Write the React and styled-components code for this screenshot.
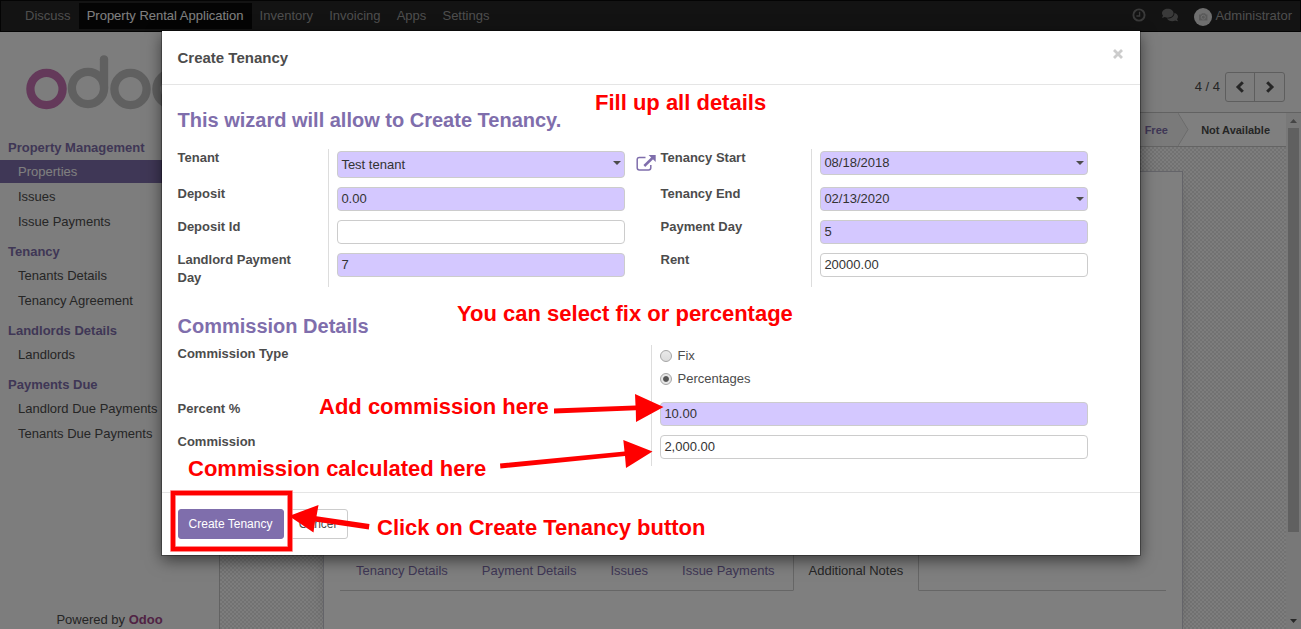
import React from "react";
import styled, { createGlobalStyle, css } from "styled-components";
import { FaComments } from "react-icons/fa";

const Global = createGlobalStyle`
  *, *::before, *::after { box-sizing: border-box; }
  body {
    margin: 0;
    overflow: hidden;
    font: 13px/18px "Liberation Sans", Arial, sans-serif;
    color: #4c4c4c;
  }
`;

const purple = "#7f6eac";

const Screen = styled.div`
  position: relative;
  width: 1301px;
  height: 629px;
  overflow: hidden;
  background: #fbfbfb;
`;

const Page = styled.div`
  height: 100%;
  display: flex;
  flex-direction: column;
`;

const Navbar = styled.nav`
  flex: none;
  height: 32px;
  display: flex;
  align-items: flex-start;
  background: #262626;
  border: 1px solid #080808;
  padding: 2px 8px 0 16px;
`;

const NavItem = styled.a`
  height: 26px;
  line-height: 25px;
  padding: 0 8.15px 0 8px;
  color: ${(p) => (p.$active ? "#fff" : "#9d9d9d")};
  background: ${(p) => (p.$active ? "#080808" : "transparent")};
`;

const Systray = styled.div`
  margin-left: auto;
  height: 26px;
  display: flex;
  align-items: center;
  color: #747474;
  line-height: 25px;
  svg { display: block; }
`;

const SysIcon = styled.span`
  margin-right: ${(p) => p.$gap}px;
  padding-bottom: ${(p) => p.$lift || 0}px;
`;

const Avatar = styled.svg`
  margin-top: 2px;
`;

const UserName = styled.span`
  margin-left: 3px;
  padding-bottom: 2px;
  color: #9d9d9d;
`;

const Main = styled.div`
  flex: 1;
  min-height: 0;
  display: flex;
`;

const Sidebar = styled.aside`
  width: 220px;
  flex: none;
  border-right: 1px solid #c4c4c4;
  background: #fafafa;
  display: flex;
  flex-direction: column;
`;

const Logo = styled.svg`
  display: block;
  width: 219px;
  height: 103px;
  flex: none;
`;

const MenuSection = styled.section`
  margin-bottom: 4px;
`;

const MenuHeader = styled.div`
  height: 25px;
  line-height: 25px;
  padding-left: 8px;
  font-weight: bold;
  color: ${purple};
`;

const MenuItem = styled.a`
  display: block;
  height: 23px;
  line-height: 23px;
  margin-bottom: 2px;
  padding-left: 18px;
  color: ${(p) => (p.$active ? "#fff" : "#4c4c4c")};
  background: ${(p) => (p.$active ? purple : "transparent")};
`;

const Powered = styled.div`
  margin-top: auto;
  height: 18px;
  text-align: center;
  b { color: #a24689; }
`;

const Content = styled.main`
  flex: 1;
  display: flex;
  flex-direction: column;
`;

const ControlPanel = styled.div`
  height: 81px;
  flex: none;
  border-bottom: 1px solid #c4c4c4;
  display: flex;
  justify-content: flex-end;
  padding: 40px 16px 0 0;
  line-height: 29px;
`;

const Pager = styled.div`
  margin-left: 5px;
  width: 60px;
  height: 30px;
  display: flex;
  border: 1px solid #bcbcbc;
  border-radius: 3px;
`;

const PagerButton = styled.span`
  width: 28px;
  display: grid;
  place-items: center;
  padding-bottom: 1px;
  & + & {
    width: 30px;
    border-left: 1px solid #bcbcbc;
  }
`;

const Scroller = styled.div`
  flex: 1;
  min-height: 0;
  display: flex;
`;

const FormView = styled.div`
  flex: 1;
  display: flex;
  flex-direction: column;
  background-color: #fafafa;
  background-image: conic-gradient(#e4e4e4 25%, #fafafa 0 50%, #e4e4e4 0 75%, #fafafa 0);
  background-size: 4px 4px;
`;

const Statusbar = styled.div`
  height: 34px;
  flex: none;
  background: #fff;
  border-bottom: 1px solid #c8c8c8;
  display: flex;
  justify-content: flex-end;
  font-size: 11px;
  font-weight: bold;
  line-height: 34px;
`;

const CurrentStatus = styled.span`
  width: 53px;
  padding-left: 19.5px;
  white-space: nowrap;
  color: ${purple};
  background: #f4f4f4;
`;

const StatusArrow = styled.svg`
  display: block;
  width: 11px;
  height: 33px;
`;

const NextStatus = styled.span`
  padding: 0 16px 0 12px;
`;

const Sheet = styled.div`
  flex: 1;
  width: 860px;
  margin: 24px 0 0 103px;
  border: 1px solid #c8c8d3;
  border-bottom: 0;
  background: #fff;
  box-shadow: 0 5px 20px -15px #000;
  padding: 378px 16px 0;
`;

const Tabs = styled.div`
  display: flex;
  height: 41px;
  border-bottom: 1px solid #ccc;
`;

const Tab = styled.a`
  height: 41px;
  line-height: 40px;
  margin-right: 2px;
  padding: 0 15px;
  border: 1px solid transparent;
  color: ${purple};
  ${(p) =>
    p.$active &&
    css`
      color: #4c4c4c;
      background: #fff;
      border-color: #ccc #ccc #fff;
    `}
`;

const Scrollbar = styled.div`
  width: 15px;
  background: #f1f1f1;
  display: flex;
  flex-direction: column;
  align-items: center;
`;

const ScrollButton = styled.svg`
  flex: none;
  width: 15px;
  height: 15px;
`;

const BottomScrollButton = styled(ScrollButton)`
  margin-top: auto;
`;

const Thumb = styled.div`
  width: 11px;
  height: 404px;
  background: #c1c1c1;
`;

const Backdrop = styled.div`
  position: absolute;
  inset: 0;
  padding: 31px 0 0 162px;
  background: rgba(0, 0, 0, 0.5);
`;

const Modal = styled.div`
  width: 978px;
  height: 524px;
  display: flex;
  flex-direction: column;
  background: #fff;
  box-shadow: 0 0 0 1px rgba(0, 0, 0, 0.3), 0 5px 15px rgba(0, 0, 0, 0.55);
`;

const ModalHeader = styled.header`
  height: 54px;
  flex: none;
  display: flex;
  justify-content: space-between;
  align-items: center;
  padding: 0 17.5px 0 15.5px;
  border-bottom: 1px solid #e5e5e5;
  font-size: 15px;
  font-weight: bold;
`;

const CloseIcon = styled.svg`
  display: block;
  width: 10px;
  height: 10px;
  margin-bottom: 7px;
`;

const ModalBody = styled.div`
  flex: 1;
  padding: 0 16px 0 15.5px;
`;

const Heading = styled.h2`
  margin: 0;
  padding-top: ${(p) => p.$top}px;
  height: ${(p) => p.$height}px;
  font-size: 20px;
  line-height: 24px;
  color: ${purple};
`;

const Groups = styled.div`
  display: flex;
`;

const Group = styled.div`
  width: ${(p) => p.$width}px;
`;

const Row = styled.div`
  display: grid;
  grid-template-columns: ${(p) => p.$label}px 1fr;
  height: ${(p) => p.$height || 33}px;
`;

const Label = styled.label`
  font-weight: bold;
  padding-right: 30px;
`;

const Value = styled.div`
  border-left: 1px solid #ddd;
  padding: 2px 0 0 8px;
  display: flex;
  align-items: flex-start;
`;

const Field = styled.div`
  width: ${(p) => p.$width}px;
  height: ${(p) => (p.$tall ? 27 : 24)}px;
  line-height: ${(p) => (p.$tall ? 25 : 22)}px;
  flex: none;
  display: flex;
  justify-content: space-between;
  padding: 0 3px 0 3.4px;
  border: 1px solid #ccc;
  border-radius: 4px;
  background: ${(p) => (p.$required ? "#d4c8ff" : "#fff")};
  color: #333;
`;

const Caret = styled.span`
  width: 0;
  height: 0;
  margin-top: 9px;
  border: 4px solid transparent;
  border-top-color: #4c4c4c;
  border-bottom: 0;
`;

const LinkIcon = styled.svg`
  width: 20px;
  height: 17px;
  margin: 3px 0 0 11px;
`;

const Radios = styled.div`
  display: flex;
  flex-direction: column;
`;

const RadioLine = styled.div`
  height: 23px;
  line-height: 18px;
  display: flex;
`;

const Radio = styled.span`
  width: 12px;
  height: 12px;
  margin: 3px 5.5px 0 0;
  border: 1px solid #a5a5a5;
  border-radius: 50%;
  background: ${(p) =>
    p.$checked
      ? "radial-gradient(circle, #555 0 2.4px, #e6e6e6 3.4px)"
      : "linear-gradient(#e9e9e9, #dcdcdc)"};
`;

const ModalFooter = styled.footer`
  height: 63px;
  flex: none;
  border-top: 1px solid #e5e5e5;
  padding: 16px;
  display: flex;
  gap: 4px;
`;

const Button = styled.button`
  height: 30px;
  width: ${(p) => (p.$primary ? 106 : 60)}px;
  padding: 0 1px 0 0;
  font: 12px "Liberation Sans", Arial, sans-serif;
  border-radius: 3px;
  border: 1px solid ${(p) => (p.$primary ? purple : "#ccc")};
  background: ${(p) => (p.$primary ? purple : "#fff")};
  color: ${(p) => (p.$primary ? "#fff" : "#4c4c4c")};
`;

const Marks = styled.svg`
  position: absolute;
  inset: 0;
`;

const Note = styled.div`
  position: absolute;
  left: ${(p) => p.$x}px;
  top: ${(p) => p.$y}px;
  font-size: 22px;
  line-height: 26px;
  font-weight: bold;
  white-space: nowrap;
  color: #f00;
`;

const menu = [
  ["Property Management", ["Properties", "Issues", "Issue Payments"]],
  ["Tenancy", ["Tenants Details", "Tenancy Agreement"]],
  ["Landlords Details", ["Landlords"]],
  ["Payments Due", ["Landlord Due Payments", "Tenants Due Payments"]],
];

const leftFields = [
  { label: "Tenant", value: "Test tenant", required: true, caret: true, tall: true, link: true, height: 36 },
  { label: "Deposit", value: "0.00", required: true },
  { label: "Deposit Id", value: "" },
  { label: "Landlord Payment Day", value: "7", required: true, height: 36 },
];

const rightFields = [
  { label: "Tenancy Start", value: "08/18/2018", required: true, caret: true, height: 36 },
  { label: "Tenancy End", value: "02/13/2020", required: true, caret: true },
  { label: "Payment Day", value: "5", required: true },
  { label: "Rent", value: "20000.00", height: 36 },
];

function FieldRow({ field, labelWidth, fieldWidth }) {
  return (
    <Row $label={labelWidth} $height={field.height}>
      <Label>{field.label}</Label>
      <Value>
        <Field $width={fieldWidth} $required={field.required} $tall={field.tall}>
          {field.value}
          {field.caret && <Caret />}
        </Field>
        {field.link && (
          <LinkIcon viewBox="0 0 20 17" fill="none" stroke={purple} strokeWidth="1.5">
            <path d="M9.5 3.4H3.4Q1.2 3.4 1.2 5.6V13.8Q1.2 16 3.4 16H12.6Q14.8 16 14.8 13.8V11" />
            <path d="M8.3 12L17 3.5" strokeWidth="2.5" />
            <path d="M12.6 1H19.7V8Z" fill={purple} stroke="none" />
          </LinkIcon>
        )}
      </Value>
    </Row>
  );
}

function Background() {
  return (
    <Page>
      <Navbar>
        {["Discuss", "Property Rental Application", "Inventory", "Invoicing", "Apps", "Settings"].map((t, i) => (
          <NavItem key={t} $active={i === 1}>{t}</NavItem>
        ))}
        <Systray>
          <SysIcon $gap={16} $lift={2}>
            <svg width="14" height="14" fill="none" stroke="currentColor" strokeWidth="1.9">
              <circle cx="7" cy="7" r="5.6" />
              <path d="M7.6 3.8V8H4.4" strokeWidth="1.3" />
            </svg>
          </SysIcon>
          <SysIcon $gap={16} $lift={2}><FaComments size={16} /></SysIcon>
          <Avatar width="18" height="18">
            <circle cx="9" cy="9" r="9" fill="#dedede" />
            <path d="M5 6.5h2l1-1.2h3l1 1.2h1.4V12.4H5Z" fill="#b5b5b5" />
            <circle cx="9.3" cy="9.2" r="2" fill="none" stroke="#dedede" />
          </Avatar>
          <UserName>Administrator</UserName>
        </Systray>
      </Navbar>
      <Main>
        <Sidebar>
          <Logo viewBox="0 32 219 103" fill="none" stroke="#c0c0c0" strokeWidth="8.3">
            <circle cx="46.5" cy="89" r="16.1" stroke="#c873b4" />
            <circle cx="88" cy="88" r="16.1" />
            <path d="M104 88V59.3" strokeLinecap="round" />
            <circle cx="130.5" cy="89" r="16.1" />
            <circle cx="172.5" cy="89" r="16.1" />
          </Logo>
          {menu.map(([title, items]) => (
            <MenuSection key={title}>
              <MenuHeader>{title}</MenuHeader>
              {items.map((t) => (
                <MenuItem key={t} $active={t === "Properties"}>{t}</MenuItem>
              ))}
            </MenuSection>
          ))}
          <Powered>Powered by <b>Odoo</b></Powered>
        </Sidebar>
        <Content>
          <ControlPanel>
            4 / 4
            <Pager>
              <PagerButton>
                <svg width="10" height="12" fill="none" stroke="#4c4c4c" strokeWidth="3"><path d="M7.8 1.2L3 6L7.8 10.8" /></svg>
              </PagerButton>
              <PagerButton>
                <svg width="10" height="12" fill="none" stroke="#4c4c4c" strokeWidth="3"><path d="M2.2 1.2L7 6L2.2 10.8" /></svg>
              </PagerButton>
            </Pager>
          </ControlPanel>
          <Scroller>
            <FormView>
              <Statusbar>
                <CurrentStatus>Free</CurrentStatus>
                <StatusArrow viewBox="0 0 11 33">
                  <path d="M0 0L10 16.5L0 33Z" fill="#f4f4f4" />
                  <path d="M0 0L10 16.5L0 33" fill="none" stroke="#d6d6d6" />
                </StatusArrow>
                <NextStatus>Not Available</NextStatus>
              </Statusbar>
              <Sheet>
                <Tabs>
                  {["Tenancy Details", "Payment Details", "Issues", "Issue Payments", "Additional Notes"].map((t, i) => (
                    <Tab key={t} $active={i === 4}>{t}</Tab>
                  ))}
                </Tabs>
              </Sheet>
            </FormView>
            <Scrollbar>
              <ScrollButton><path d="M4 10L7.5 6L11 10Z" fill="#8a8a8a" /></ScrollButton>
              <Thumb />
              <BottomScrollButton><path d="M4 5L7.5 9L11 5Z" fill="#505050" /></BottomScrollButton>
            </Scrollbar>
          </Scroller>
        </Content>
      </Main>
    </Page>
  );
}

export default function App() {
  return (
    <Screen>
      <Global />
      <Background />
      <Backdrop>
        <Modal>
          <ModalHeader>
            Create Tenancy
            <CloseIcon viewBox="0 0 10 10" stroke="#ccc" strokeWidth="2.8"><path d="M1 1L9 9M9 1L1 9" /></CloseIcon>
          </ModalHeader>
          <ModalBody>
            <Heading $top={23} $height={64}>This wizard will allow to Create Tenancy.</Heading>
            <Groups>
              <Group $width={483}>
                {leftFields.map((f) => <FieldRow key={f.label} field={f} labelWidth={150.5} fieldWidth={288} />)}
              </Group>
              <Group $width={440}>
                {rightFields.map((f) => <FieldRow key={f.label} field={f} labelWidth={150.5} fieldWidth={268} />)}
              </Group>
            </Groups>
            <Heading $top={27} $height={58}>Commission Details</Heading>
            <Row $label={473.5} $height={55}>
              <Label>Commission Type</Label>
              <Value>
                <Radios>
                  <RadioLine><Radio />Fix</RadioLine>
                  <RadioLine><Radio $checked />Percentages</RadioLine>
                </Radios>
              </Value>
            </Row>
            <FieldRow field={{ label: "Percent %", value: "10.00", required: true }} labelWidth={473.5} fieldWidth={428} />
            <FieldRow field={{ label: "Commission", value: "2,000.00" }} labelWidth={473.5} fieldWidth={428} />
          </ModalBody>
          <ModalFooter>
            <Button $primary>Create Tenancy</Button>
            <Button>Cancel</Button>
          </ModalFooter>
        </Modal>
      </Backdrop>
      <Marks width="1301" height="629" fill="#f00">
        <rect x="173" y="493" width="117" height="56" fill="none" stroke="#ff8080" strokeWidth="5.6" />
        <rect x="173" y="493" width="117" height="56" fill="none" stroke="#f00" strokeWidth="4.2" />
        <path d="M554 408.5L635.5 405.5L635 394L663.5 407L636 422L635.8 410.3L554 413.5Z" />
        <path d="M500 463.5L624.5 451.5L623.3 440L652.5 451.5L626 468L625 456L500.4 468.5Z" />
        <path d="M369.5 524L316.5 516.3L318.5 505L289 516L313.5 532.5L315 521.5L368.8 529.5Z" />
      </Marks>
      <Note $x={595} $y={90}>Fill up all details</Note>
      <Note $x={457} $y={301}>You can select fix or percentage</Note>
      <Note $x={319} $y={394}>Add commission here</Note>
      <Note $x={188} $y={456}>Commission calculated here</Note>
      <Note $x={377} $y={515}>Click on Create Tenancy button</Note>
    </Screen>
  );
}
